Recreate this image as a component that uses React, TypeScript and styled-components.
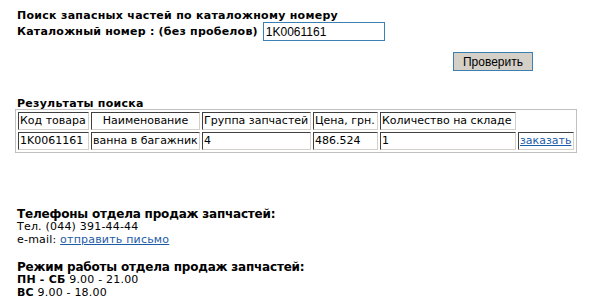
import React from "react";
import styled, { createGlobalStyle } from "styled-components";

const Global = createGlobalStyle`
  html, body { background: #ffffff; }
  body {
    margin: 8px;
    font-family: "DejaVu Sans", Verdana, sans-serif;
    font-size: 11px;
    color: #000000;
  }
`;

const Page = styled.div`
  padding: 1px 0 0 9px;
  display: flex;
  flex-direction: column;
  align-items: flex-start;
`;

const Title = styled.div`
  font-weight: bold;
  font-size: 11px;
  line-height: 13px;
  letter-spacing: 0.28px;
`;

const FormRow = styled.div`
  display: flex;
  align-items: center;
  gap: 5px;
`;

const Label = styled.span`
  font-weight: bold;
  font-size: 11px;
  line-height: 13px;
  letter-spacing: 0.22px;
`;

const Input = styled.input`
  box-sizing: border-box;
  width: 122px;
  height: 19px;
  border: 1px solid #3c7fb1;
  padding: 0 2px;
  font-family: "Liberation Sans", Arial, sans-serif;
  font-size: 12px;
  color: #000;
  outline: none;
`;

const ButtonRow = styled.div`
  margin: 11px 0 0 436px;
`;

const Button = styled.button`
  box-sizing: border-box;
  width: 80px;
  height: 19px;
  background: #d4d0c8;
  border: 1px solid #3c7fb1;
  padding: 0;
  font-family: "Liberation Sans", Arial, sans-serif;
  font-size: 12px;
  color: #000;
`;

const SectionTitle = styled.div`
  margin-top: 27px;
  font-weight: bold;
  font-size: 11px;
  line-height: 11px;
  letter-spacing: 0.25px;
`;

const Results = styled.table`
  margin-left: -2px;
  border: 1px solid #c0c0c0;
  border-collapse: separate;
  border-spacing: 2px;
  font-size: 11px;
`;

const Cell = styled.td<{ $w: number; $center?: boolean }>`
  box-sizing: border-box;
  width: ${(p) => p.$w}px;
  padding: 1px 1px;
  line-height: 14px;
  white-space: nowrap;
  text-align: ${(p) => (p.$center ? "center" : "left")};
  border-style: solid;
  border-width: 1px;
  border-color: #404040 #d4d0c8 #d4d0c8 #404040;
`;

const BlankCell = styled.td`
  padding: 1px;
  border: none;
`;

const Link = styled.a`
  color: #1d5ba6;
  text-decoration: underline;
`;

const Footer = styled.div`
  margin-top: 55px;
  line-height: 12.5px;
  letter-spacing: 0.2px;
`;

const FooterHeading = styled.div<{ $gap?: number }>`
  margin-top: ${(p) => p.$gap ?? 0}px;
  font-weight: bold;
  font-size: 12px;
  line-height: 13px;
  letter-spacing: -0.2px;
`;

const Line = styled.div``;

const Strong = styled.b``;

const cols = [71, 109, 109, 65, 136, 56];

export default function App() {
  return (
    <>
      <Global />
      <Page>
        <Title>Поиск запасных частей по каталожному номеру</Title>
        <FormRow>
          <Label>Каталожный номер : (без пробелов)</Label>
          <Input defaultValue="1K0061161" />
        </FormRow>
        <ButtonRow>
          <Button>Проверить</Button>
        </ButtonRow>
        <SectionTitle>Результаты поиска</SectionTitle>
        <Results>
          <tbody>
            <tr>
              <Cell $w={cols[0]}>Код товара</Cell>
              <Cell $w={cols[1]} $center>
                Наименование
              </Cell>
              <Cell $w={cols[2]}>Группа запчастей</Cell>
              <Cell $w={cols[3]}>Цена, грн.</Cell>
              <Cell $w={cols[4]}>Количество на складе</Cell>
              <BlankCell />
            </tr>
            <tr>
              <Cell $w={cols[0]}>1K0061161</Cell>
              <Cell $w={cols[1]}>ванна в багажник</Cell>
              <Cell $w={cols[2]}>4</Cell>
              <Cell $w={cols[3]}>486.524</Cell>
              <Cell $w={cols[4]}>1</Cell>
              <Cell $w={cols[5]}>
                <Link href="#">заказать</Link>
              </Cell>
            </tr>
          </tbody>
        </Results>
        <Footer>
          <FooterHeading>Телефоны отдела продаж запчастей:</FooterHeading>
          <Line>Тел. (044) 391-44-44</Line>
          <Line>
            e-mail: <Link href="#">отправить письмо</Link>
          </Line>
          <FooterHeading $gap={15}>Режим работы отдела продаж запчастей:</FooterHeading>
          <Line>
            <Strong>ПН - СБ</Strong> 9.00 - 21.00
          </Line>
          <Line>
            <Strong>ВС</Strong> 9.00 - 18.00
          </Line>
        </Footer>
      </Page>
    </>
  );
}
